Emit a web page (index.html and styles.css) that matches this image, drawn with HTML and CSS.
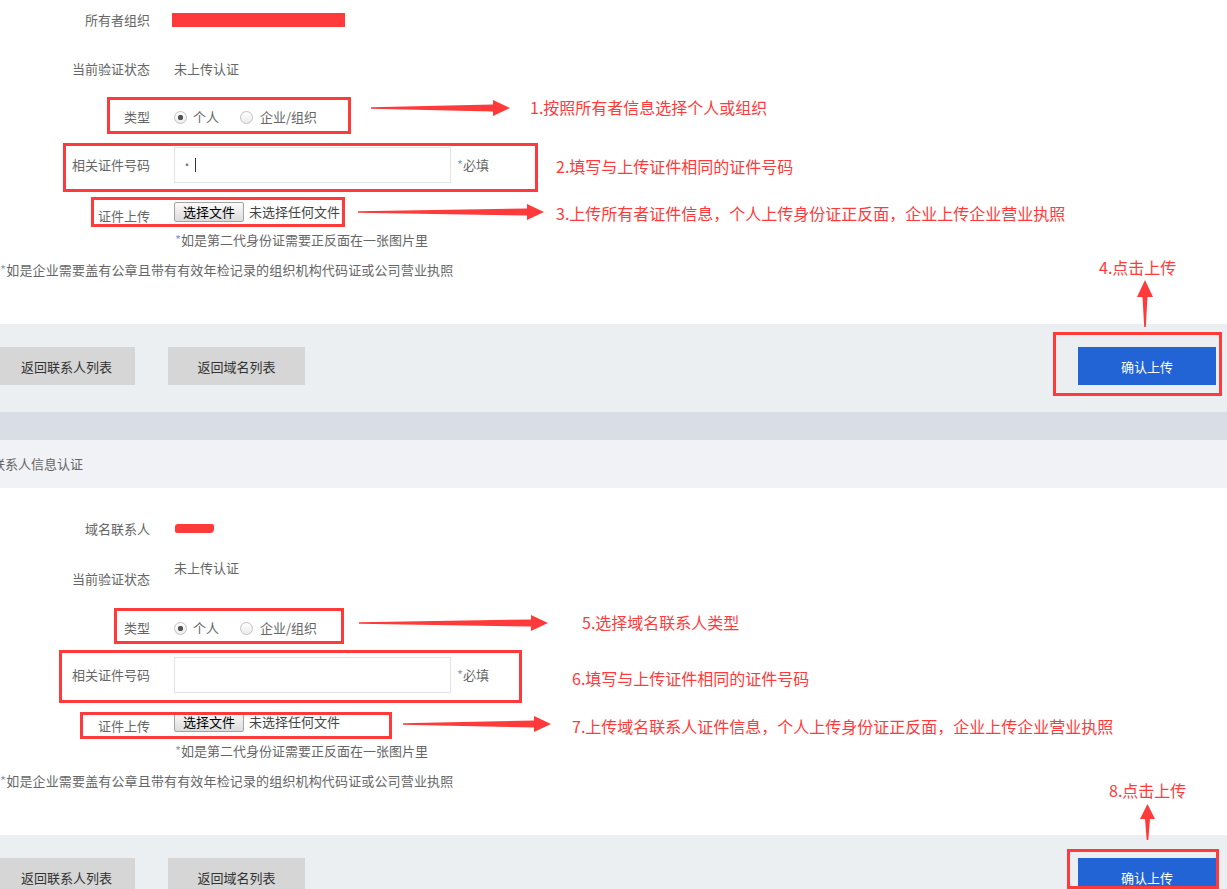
FILE: index.html
```html
<!DOCTYPE html>
<html lang="zh-CN">
<head>
<meta charset="utf-8">
<title>证件上传</title>
<link rel="stylesheet" href="styles.css">
</head>
<body>
<div class="page">

  <div class="block">
    <section class="panel p1">
      <div class="row r-a"><span class="lbl">所有者组织</span><span class="redact"></span></div>
      <div class="row r-b"><span class="lbl">当前验证状态</span><span class="val">未上传认证</span></div>
      <div class="row r-c">
        <span class="lbl">类型</span>
        <span class="radios">
          <label class="opt"><input class="radio" type="radio" name="t1" checked><span>个人</span></label>
          <label class="opt"><input class="radio" type="radio" name="t1"><span>企业/组织</span></label>
        </span>
      </div>
      <div class="row r-d">
        <span class="lbl">相关证件号码</span>
        <span class="field"><span class="input"><span class="dot">·</span><span class="caret"></span></span><span class="req"><i>*</i>必填</span></span>
      </div>
      <div class="row r-e">
        <span class="lbl low">证件上传</span>
        <span class="file"><span class="filebtn">选择文件</span><span class="fname">未选择任何文件</span></span>
      </div>
      <p class="hint"><i>*</i>如是第二代身份证需要正反面在一张图片里</p>
      <p class="note"><i>*</i>如是企业需要盖有公章且带有有效年检记录的组织机构代码证或公司营业执照</p>
    </section>
    <div class="actions">
      <button class="btn gray first">返回联系人列表</button>
      <button class="btn gray second">返回域名列表</button>
      <button class="btn primary">确认上传</button>
    </div>

    <div class="box b1"></div>
    <svg class="arrow a1" width="139" height="16" viewBox="0 0 139 16"><polygon points="0,7.2 122,4.5 122,0 139,8 122,16 122,11.5 0,8.8"/></svg>
    <div class="tip t1">1.按照所有者信息选择个人或组织</div>
    <div class="box b2"></div>
    <div class="tip t2">2.填写与上传证件相同的证件号码</div>
    <div class="box b3"></div>
    <svg class="arrow a3" width="186" height="16" viewBox="0 0 186 16"><polygon points="0,7.2 169,4.5 169,0 186,8 169,16 169,11.5 0,8.8"/></svg>
    <div class="tip t3">3.上传所有者证件信息，个人上传身份证正反面，企业上传企业营业执照</div>
    <div class="tip t4">4.点击上传</div>
    <svg class="arrow up4" width="16" height="47" viewBox="0 0 16 47"><polygon points="8,0 16,17 10.5,17 8.8,47 7.2,47 5.5,17 0,17"/></svg>
    <div class="box b4"></div>
  </div>

  <div class="sep"></div>
  <div class="head">联系人信息认证</div>

  <div class="block">
    <section class="panel p2">
      <div class="row r-a"><span class="lbl">域名联系人</span><span class="scribble"></span></div>
      <div class="row r-b split"><span class="lbl">当前验证状态</span><span class="val">未上传认证</span></div>
      <div class="row r-c">
        <span class="lbl">类型</span>
        <span class="radios">
          <label class="opt"><input class="radio" type="radio" name="t2" checked><span>个人</span></label>
          <label class="opt"><input class="radio" type="radio" name="t2"><span>企业/组织</span></label>
        </span>
      </div>
      <div class="row r-d">
        <span class="lbl">相关证件号码</span>
        <span class="field"><span class="input"></span><span class="req"><i>*</i>必填</span></span>
      </div>
      <div class="row r-e">
        <span class="lbl low">证件上传</span>
        <span class="file"><span class="filebtn">选择文件</span><span class="fname">未选择任何文件</span></span>
      </div>
      <p class="hint"><i>*</i>如是第二代身份证需要正反面在一张图片里</p>
      <p class="note"><i>*</i>如是企业需要盖有公章且带有有效年检记录的组织机构代码证或公司营业执照</p>
    </section>
    <div class="actions">
      <button class="btn gray first">返回联系人列表</button>
      <button class="btn gray second">返回域名列表</button>
      <button class="btn primary">确认上传</button>
    </div>

    <div class="box b5"></div>
    <svg class="arrow a5" width="189" height="16" viewBox="0 0 189 16"><polygon points="0,7.2 172,4.5 172,0 189,8 172,16 172,11.5 0,8.8"/></svg>
    <div class="tip t5">5.选择域名联系人类型</div>
    <div class="box b6"></div>
    <div class="tip t6">6.填写与上传证件相同的证件号码</div>
    <div class="box b7"></div>
    <svg class="arrow a7" width="148" height="16" viewBox="0 0 148 16"><polygon points="0,7.2 131,4.5 131,0 148,8 131,16 131,11.5 0,8.8"/></svg>
    <div class="tip t7">7.上传域名联系人证件信息，个人上传身份证正反面，企业上传企业营业执照</div>
    <div class="tip t8">8.点击上传</div>
    <svg class="arrow up8" width="15" height="36" viewBox="0 0 15 36"><polygon points="7.5,0 15,15 10,15 8.3,36 6.7,36 5,15 0,15"/></svg>
    <div class="box b8"></div>
  </div>

</div>
</body>
</html>
```

FILE: styles.css
```css
html, body {
  margin: 0;
  padding: 0;
  background: #fff;
}
body {
  width: 1227px;
  overflow: hidden;
  font-family: "Noto Sans CJK SC", "Liberation Sans", sans-serif;
  font-size: 13px;
  line-height: 20px;
  color: #666;
}
.page { width: 1227px; }

.block { position: relative; }

.panel { box-sizing: border-box; }
.p1 { height: 324px; }
.p2 { height: 347px; padding-top: 21px; }

.row {
  display: grid;
  grid-template-columns: 150px 1fr;
  column-gap: 24px;
  align-items: center;
}
.lbl { text-align: right; white-space: nowrap; }
.val { white-space: nowrap; }

.p1 .r-a { height: 40px; }
.p1 .r-b { height: 58px; }
.p1 .r-c { height: 38px; }
.p1 .r-d { height: 44px; margin-top: 7px; }
.p1 .r-e { height: 30px; margin-top: 10px; }
.p1 .hint { margin-top: 3px; }

.p2 .r-a { height: 40px; }
.p2 .r-b { height: 31px; margin-top: 9px; }
.p2 .r-c { height: 38px; margin-top: 20px; }
.p2 .r-d { height: 44px; margin-top: 6px; }
.p2 .r-e { height: 30px; margin-top: 10px; }
.p2 .hint { margin-top: 4px; }

.split .lbl { align-self: end; }
.split .val { align-self: start; }

.redact {
  display: block;
  width: 173px;
  height: 14px;
  margin-left: -2px;
  margin-top: -1px;
  background: #ff3a3a;
}
.scribble {
  display: block;
  width: 39px;
  height: 9px;
  margin-left: 1px;
  margin-top: -1px;
  background: #ff3a3a;
  border-radius: 3px 2px 4px 2px;
}

.radios { display: flex; align-items: center; }
.opt { display: flex; align-items: center; }
.opt + .opt { margin-left: 21px; }
.opt span { margin-left: 6px; }
.opt + .opt span { margin-left: 7px; }
.radio {
  appearance: none;
  -webkit-appearance: none;
  width: 13px;
  height: 13px;
  margin: 0;
  box-sizing: border-box;
  border: 1px solid #c2c2c2;
  border-radius: 50%;
  background: linear-gradient(#fdfdfd, #ececec);
}
.radio:checked {
  background: radial-gradient(circle, #555 0 2.4px, transparent 3px), linear-gradient(#fdfdfd, #ececec);
}

.field { display: flex; align-items: center; }
.input {
  position: relative;
  display: flex;
  align-items: center;
  box-sizing: border-box;
  width: 277px;
  height: 36px;
  border: 1px solid #e2e2e2;
  background: #fff;
  padding-left: 6px;
}
.dot { color: #777; font-size: 12px; line-height: 12px; }
.caret {
  display: block;
  width: 1px;
  height: 14px;
  margin-left: 2px;
  background: #333;
}
.req { margin-left: 6px; color: #666; }
i { font-style: normal; color: #8e9cbc; }

.file { display: flex; align-items: center; }
.filebtn {
  box-sizing: border-box;
  width: 70px;
  height: 20px;
  line-height: 18px;
  text-align: center;
  color: #000;
  border: 1px solid #a3a3a3;
  border-radius: 2px;
  background: linear-gradient(#fbfbfb, #dcdcdc);
}
.fname { margin-left: 5px; color: #444; }
.low { padding-top: 8px; }

.hint { margin: 0 0 0 175px; }
.note { margin: 10px 0 0 0; letter-spacing: 0.15px; }

.actions {
  display: flex;
  align-items: flex-start;
  box-sizing: border-box;
  height: 88px;
  padding: 23px 11px 0 0;
  background: #eceff2;
}
.btn {
  height: 38px;
  border: 0;
  padding: 0;
  font-family: inherit;
  font-size: 13px;
  cursor: pointer;
}
.gray { width: 137px; background: #d6d6d6; color: #333; }
.first { margin-left: -2px; }
.second { margin-left: 33px; }
.primary { width: 138px; margin-left: auto; background: #2264d6; color: #fff; }

.sep { height: 28px; background: #d9dde6; }
.head {
  height: 48px;
  line-height: 48px;
  background: #f0f2f6;
  text-indent: -8px;
  white-space: nowrap;
  color: #666;
}

/* annotation overlays */
.box {
  position: absolute;
  box-sizing: border-box;
  border: 3px solid #ff3a3a;
}
.arrow { position: absolute; fill: #ff3a3a; }
.tip {
  position: absolute;
  font-size: 16px;
  line-height: 20px;
  color: #ff3a3a;
  white-space: nowrap;
}

.b1 { left: 107px; top: 97px; width: 244px; height: 37px; }
.a1 { left: 371px; top: 100px; }
.t1 { left: 530px; top: 97px; }
.b2 { left: 63px; top: 143px; width: 475px; height: 49px; }
.t2 { left: 556px; top: 156px; }
.b3 { left: 91px; top: 197px; width: 254px; height: 30px; }
.a3 { left: 358px; top: 204px; }
.t3 { left: 556px; top: 203px; }
.t4 { left: 1099px; top: 257px; }
.up4 { left: 1137px; top: 280px; }
.b4 { left: 1053px; top: 332px; width: 169px; height: 64px; }

.b5 { left: 114px; top: 120px; width: 230px; height: 36px; }
.a5 { left: 359px; top: 127px; }
.t5 { left: 582px; top: 124px; }
.b6 { left: 59px; top: 162px; width: 463px; height: 53px; }
.t6 { left: 572px; top: 180px; }
.b7 { left: 80px; top: 224px; width: 312px; height: 27px; }
.a7 { left: 403px; top: 228px; }
.t7 { left: 572px; top: 228px; }
.t8 { left: 1109px; top: 292px; }
.up8 { left: 1140px; top: 316px; }
.b8 { left: 1067px; top: 361px; width: 152px; height: 40px; }
```
